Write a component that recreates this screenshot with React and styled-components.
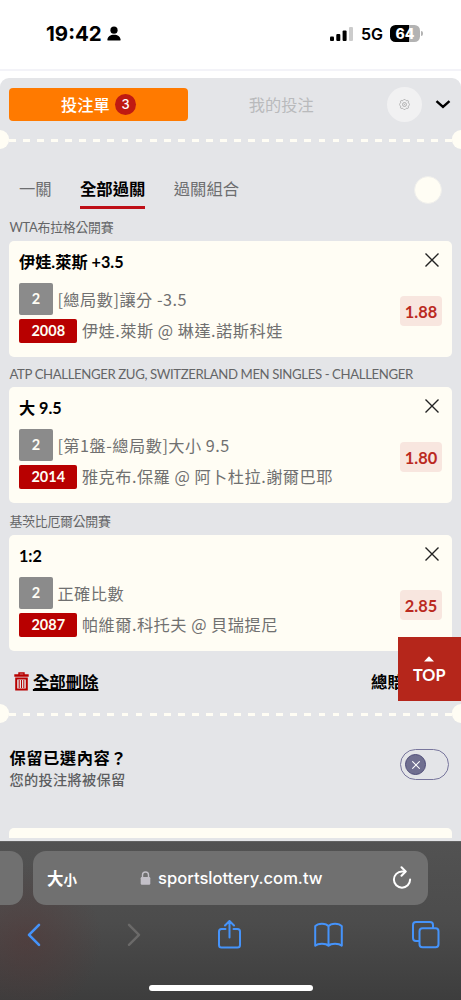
import styled, { createGlobalStyle } from 'styled-components';

const GlobalStyle = createGlobalStyle`
    * {
        box-sizing: border-box;
    }
    body {
        margin: 0;
        background: #fff;
        font-family: Lato, 'Noto Sans CJK TC', sans-serif;
    }
`;

const cjk = `'Noto Sans CJK TC', sans-serif`;

const Screen = styled.div`
    position: relative;
    width: 461px;
    height: 1000px;
    overflow: hidden;
    display: flex;
    flex-direction: column;
    background: #fff;
`;

const StatusBar = styled.header`
    height: 71px;
    flex: none;
    display: flex;
    align-items: center;
    justify-content: space-between;
    padding: 0 38px 2px 46px;
    border-bottom: 2px solid #f3f3f8;
    font-family: Inter, sans-serif;
`;

const StatusGroup = styled.div`
    display: flex;
    align-items: center;
`;

const Clock = styled.span`
    width: 61px;
    font-size: 20.5px;
    font-weight: 700;
    line-height: 24px;
`;

const Network = styled.span`
    width: 29px;
    margin-left: 8px;
    font-size: 16px;
    font-weight: 600;
    line-height: 20px;
`;

const Battery = styled.span`
    width: 30px;
    height: 17px;
    border-radius: 5.5px;
    background: linear-gradient(90deg, #000 64%, #b3b3b3 64%);
    color: #fff;
    font-size: 14px;
    font-weight: 800;
    line-height: 17px;
    text-align: center;
`;

const BatteryTip = styled.span`
    width: 2px;
    height: 5px;
    margin-left: 1px;
    border-radius: 0 2px 2px 0;
    background: #b3b3b3;
`;

const Slip = styled.main`
    height: 763px;
    flex: none;
    margin-top: 7px;
    border-radius: 9px 9px 0 0;
    background: #e4e5e8;
    overflow: hidden;
`;

const SlipHeader = styled.div`
    height: 52px;
    padding: 0 10px 0 9.3px;
    display: flex;
    align-items: center;
`;

const SlipTab = styled.button`
    width: 179px;
    height: 33px;
    margin-right: 4px;
    padding: 0;
    display: flex;
    align-items: center;
    justify-content: center;
    gap: 5.5px;
    border: 0;
    border-radius: 4px;
    background: ${(p) => (p.$active ? '#ff7a00' : 'transparent')};
    color: ${(p) => (p.$active ? '#fff' : '#b9babc')};
    font-family: ${cjk};
    font-size: 16.2px;
    font-weight: ${(p) => (p.$active ? 500 : 400)};
    line-height: 20px;
`;

const Count = styled.span`
    width: 21px;
    height: 21px;
    border-radius: 50%;
    background: #bf1a12;
    font-family: Inter, sans-serif;
    font-size: 13px;
    font-weight: 500;
    line-height: 21px;
    text-align: center;
`;

const GearButton = styled.div`
    width: 35px;
    height: 35px;
    margin-left: 12px;
    margin-right: 13.5px;
    flex: none;
    display: flex;
    align-items: center;
    justify-content: center;
    border-radius: 50%;
    background: #f1f1f2;
`;

const Tear = styled.div`
    height: 19px;
    display: flex;
    align-items: center;
`;

const Notch = styled.span`
    width: 9.3px;
    height: 19px;
    flex: none;
    border-radius: ${(p) => (p.$right ? '10px 0 0 10px' : '0 10px 10px 0')};
    background: #fffdf4;
`;

const Dashes = styled.span`
    flex: 1;
    height: 3px;
    margin-top: 2px;
    background: repeating-linear-gradient(
        90deg,
        #fffdf4 0 6.8px,
        transparent 6.8px 14.07px
    );
`;

const ComboTabs = styled.nav`
    height: 68px;
    padding: 22px 19px 0 19px;
    display: flex;
    gap: 28.3px;
`;

const ComboTab = styled.span`
    height: 37.5px;
    padding-top: 5px;
    border-bottom: 3.5px solid ${(p) => (p.$active ? '#bf0f17' : 'transparent')};
    color: ${(p) => (p.$active ? '#000' : '#6d6e70')};
    font-family: ${cjk};
    font-size: 16.35px;
    font-weight: ${(p) => (p.$active ? 700 : 400)};
    line-height: 24px;
    white-space: nowrap;
`;

const RoundSlot = styled.span`
    width: 28px;
    height: 28px;
    margin-top: 5px;
    margin-left: auto;
    border-radius: 50%;
    background: #fffdf4;
    border: 1px solid #efefec;
`;

const League = styled.div`
    height: ${(p) => p.$height}px;
    padding: 0 9.5px ${(p) => (p.$latin ? 3 : 4)}px;
    display: flex;
    align-items: flex-end;
    color: #646567;
    font-size: ${(p) => (p.$latin ? 13.2 : 12.9)}px;
    line-height: 20px;
    letter-spacing: ${(p) => (p.$latin ? '-0.39px' : '-0.25px')};
    white-space: nowrap;
`;

const Card = styled.section`
    height: 116px;
    margin: 0 9.3px;
    padding: 0 9.7px;
    display: flex;
    justify-content: space-between;
    border-radius: 5px;
    background: #fffdf4;
`;

const CardSide = styled.div`
    padding-top: 12px;
    display: flex;
    flex-direction: column;
    align-items: flex-end;
    gap: 29px;
`;

const Pick = styled.h3`
    height: 42px;
    margin: 0;
    color: #000;
    font-size: 16.2px;
    font-weight: 700;
    line-height: 42px;
`;

const Line = styled.div`
    display: flex;
    align-items: center;
    gap: 4.4px;
    margin-bottom: 4px;
    color: #707070;
    font-family: ${cjk};
    font-size: 16.2px;
    letter-spacing: 0.5px;
    line-height: 23px;
    white-space: nowrap;
`;

const Tag = styled.span`
    width: ${(p) => (p.$red ? 58.5 : 34)}px;
    height: ${(p) => (p.$red ? 23.5 : 32)}px;
    border-radius: 2px;
    background: ${(p) => (p.$red ? '#b80000' : '#8b8b8b')};
    color: #fffdf4;
    font-family: Lato, sans-serif;
    font-size: 14.5px;
    font-weight: 700;
    letter-spacing: 0;
    line-height: ${(p) => (p.$red ? 24 : 32)}px;
    text-align: center;
`;

const Odds = styled.span`
    width: 42px;
    height: 30px;
    border-radius: 4px;
    background: #f8e6df;
    color: #bb2a1f;
    font-size: 16.4px;
    font-weight: 700;
    line-height: 31px;
    text-align: center;
`;

const Summary = styled.div`
    height: 53px;
    padding: 7px 9px 0 13.5px;
    display: flex;
    align-items: flex-start;
    justify-content: space-between;
    font-family: ${cjk};
    font-size: 16.4px;
    font-weight: 700;
    line-height: 46px;
`;

const ClearAll = styled.span`
    display: flex;
    align-items: center;
    gap: 4.4px;

    span {
        text-decoration: underline;
        text-decoration-thickness: 1.5px;
        text-underline-offset: 1px;
    }
`;

const TotalOdds = styled.span`
    width: 81px;
`;

const Keep = styled.div`
    height: 105px;
    padding: 22px 12px 0 9.5px;
    display: flex;
    justify-content: space-between;
`;

const KeepTitle = styled.div`
    color: #000;
    font-family: ${cjk};
    font-size: 16.3px;
    font-weight: 700;
    letter-spacing: 0.5px;
    line-height: 24px;
`;

const KeepNote = styled.div`
    color: #5c5d5f;
    font-family: ${cjk};
    font-size: 14.2px;
    font-weight: 500;
    letter-spacing: 0.3px;
    line-height: 20px;
`;

const Toggle = styled.div`
    width: 49px;
    height: 31px;
    margin-top: 4px;
    padding: 0 4px;
    display: flex;
    align-items: center;
    border: 1px solid #77759c;
    border-radius: 16px;
`;

const Knob = styled.span`
    width: 21px;
    height: 21px;
    display: flex;
    align-items: center;
    justify-content: center;
    border: 1px solid #4f4d78;
    border-radius: 50%;
    background: #706f90;
`;

const NextCard = styled.div`
    height: 9.6px;
    margin: 0 9.3px;
    border-radius: 5px 5px 0 0;
    background: #fffdf4;
`;

const TopButton = styled.button`
    position: absolute;
    right: 0;
    top: 637px;
    width: 63.5px;
    height: 63.5px;
    padding: 19px 0 0;
    display: flex;
    flex-direction: column;
    align-items: center;
    border: 0;
    background: #b5261b;
    color: #fff;
    font-family: Lato, sans-serif;
    font-size: 16.2px;
    font-weight: 700;
    line-height: 20px;
    gap: 3px;
`;

const Browser = styled.footer`
    flex: 1;
    display: flex;
    flex-direction: column;
    align-items: center;
    border-top: 1px solid #626262;
    background: radial-gradient(
            circle at 26px 98px,
            rgba(88, 50, 50, 0.42),
            rgba(88, 50, 50, 0) 76px
        ),
        linear-gradient(#525252, #4c4c4c 50%, #3d3d3d);
`;

const AddressRow = styled.div`
    width: 461px;
    padding-top: 9px;
    display: flex;
    gap: 10px;
`;

const PrevTab = styled.div`
    width: 23px;
    height: 54px;
    border-radius: 0 13px 13px 0;
    background: #707070;
`;

const AddressBar = styled.div`
    width: 395px;
    height: 54px;
    padding: 0 16px 0 14px;
    display: flex;
    align-items: center;
    border-radius: 13px;
    background: #707070;
    color: #fff;
`;

const TextSize = styled.span`
    width: 93px;
    font-family: ${cjk};
    font-size: 16.5px;
    font-weight: 700;
    line-height: 24px;

    small {
        font-size: 13.5px;
    }
`;

const Url = styled.span`
    width: 234px;
    margin-left: 7px;
    font-family: Inter, sans-serif;
    font-size: 16.6px;
    font-weight: 500;
    line-height: 24px;
`;

const Toolbar = styled.div`
    width: 461px;
    height: 60px;
    padding: 0 21px 0 20px;
    display: flex;
    align-items: center;
    justify-content: space-between;
`;

const HomeBar = styled.div`
    width: 164px;
    height: 6px;
    margin-top: 19.5px;
    border-radius: 3px;
    background: #fff;
`;

const bets = [
    {
        league: 'WTA布拉格公開賽',
        labelHeight: 24,
        pick: '伊娃.萊斯 +3.5',
        market: '[總局數]讓分 -3.5',
        code: '2008',
        match: '伊娃.萊斯 @ 琳達.諾斯科娃',
        odds: '1.88',
    },
    {
        league: 'ATP CHALLENGER ZUG, SWITZERLAND MEN SINGLES - CHALLENGER',
        latin: true,
        labelHeight: 30,
        pick: '大 9.5',
        market: '[第1盤-總局數]大小 9.5',
        code: '2014',
        match: '雅克布.保羅 @ 阿卜杜拉.謝爾巴耶',
        odds: '1.80',
    },
    {
        league: '基茨比厄爾公開賽',
        labelHeight: 32,
        pick: '1:2',
        market: '正確比數',
        code: '2087',
        match: '帕維爾.科托夫 @ 貝瑞提尼',
        odds: '2.85',
    },
];

function CloseIcon({ size = 14, color = '#222', width = 1.4 }) {
    return (
        <svg width={size} height={size} viewBox="0 0 14 14" fill="none">
            <path
                d="M.5.5l13 13M13.5.5l-13 13"
                stroke={color}
                strokeWidth={width}
            />
        </svg>
    );
}

// eight rounded lobes around the hub
function GearIcon() {
    const points = [];
    for (let i = 0; i < 64; i++) {
        const a = (i / 64) * Math.PI * 2;
        const r = 8.6 + 0.9 * Math.cos(a * 8);
        points.push(
            `${(10 + r * Math.cos(a)).toFixed(2)},${(10 + r * Math.sin(a)).toFixed(2)}`
        );
    }
    return (
        <svg
            width="11"
            height="11"
            viewBox="0 0 20 20"
            fill="none"
            stroke="#a0a0a0"
            strokeWidth="1.4"
        >
            <polygon points={points.join(' ')} />
            <circle cx="10" cy="10" r="3.6" />
            <circle cx="10" cy="10" r=".6" />
        </svg>
    );
}

function TearLine() {
    return (
        <Tear>
            <Notch />
            <Dashes />
            <Notch $right />
        </Tear>
    );
}

function Bet({ bet }) {
    return (
        <>
            <League $height={bet.labelHeight} $latin={bet.latin}>
                {bet.league}
            </League>
            <Card>
                <div>
                    <Pick>{bet.pick}</Pick>
                    <Line>
                        <Tag>2</Tag>
                        {bet.market}
                    </Line>
                    <Line>
                        <Tag $red>{bet.code}</Tag>
                        {bet.match}
                    </Line>
                </div>
                <CardSide>
                    <svg width="17" height="14" viewBox="0 0 17 14">
                        <path
                            d="M.5.5l13 13M13.5.5l-13 13"
                            stroke="#222"
                            strokeWidth="1.4"
                        />
                    </svg>
                    <Odds>{bet.odds}</Odds>
                </CardSide>
            </Card>
        </>
    );
}

function App() {
    return (
        <Screen>
            <GlobalStyle />
            <StatusBar>
                <StatusGroup>
                    <Clock>19:42</Clock>
                    <svg width="14" height="15" viewBox="0 0 14 15">
                        <circle cx="7" cy="4.2" r="3.6" />
                        <path d="M1.2 14.500C.5 14.500.3 14 .4 13.400.8 10.800 3.300 8.800 7 8.800s6.200 2 6.600 4.600c.1.600-.1 1.100-.8 1.100z" />
                    </svg>
                </StatusGroup>
                <StatusGroup>
                    <svg width="23" height="14" viewBox="0 0 23 14">
                        <rect x="0" y="9.500" width="4" height="4.500" rx="1" />
                        <rect x="6.300" y="7" width="4" height="7" rx="1" />
                        <rect x="12.600" y="3.500" width="4" height="10.500" rx="1" />
                        <rect x="19" y="0" width="4" height="14" rx="1" fill="#ccc" />
                    </svg>
                    <Network>5G</Network>
                    <Battery>64</Battery>
                    <BatteryTip />
                </StatusGroup>
            </StatusBar>

            <Slip>
                <SlipHeader>
                    <SlipTab $active>
                        投注單
                        <Count>3</Count>
                    </SlipTab>
                    <SlipTab>我的投注</SlipTab>
                    <GearButton>
                        <GearIcon />
                    </GearButton>
                    <svg width="16" height="10" viewBox="0 0 16 10" fill="none">
                        <path d="M1.500 2L8 8l6.500-6" stroke="#000" strokeWidth="2.400" />
                    </svg>
                </SlipHeader>

                <TearLine />

                <ComboTabs>
                    <ComboTab>一關</ComboTab>
                    <ComboTab $active>全部過關</ComboTab>
                    <ComboTab>過關組合</ComboTab>
                    <RoundSlot />
                </ComboTabs>

                {bets.map((bet) => (
                    <Bet key={bet.code} bet={bet} />
                ))}

                <Summary>
                    <ClearAll>
                        <svg width="15" height="19" viewBox="0 0 15 19" fill="none">
                            <path d="M5 3V1h5v2" stroke="#b80000" strokeWidth="1.400" />
                            <path d="M.3 3.500h14.400" stroke="#b80000" strokeWidth="2.500" />
                            <path
                                d="M2.200 6.500h10.600v11H2.200z"
                                stroke="#b80000"
                                strokeWidth="2"
                            />
                            <path
                                d="M5.200 8v8M7.500 8v8M9.800 8v8"
                                stroke="#b80000"
                                strokeWidth="1"
                            />
                        </svg>
                        <span>全部刪除</span>
                    </ClearAll>
                    <TotalOdds>總賠率</TotalOdds>
                </Summary>

                <TearLine />

                <Keep>
                    <div>
                        <KeepTitle>保留已選內容？</KeepTitle>
                        <KeepNote>您的投注將被保留</KeepNote>
                    </div>
                    <div>
                        <Toggle>
                            <Knob>
                                <CloseIcon size={8} color="#fff" width={1.8} />
                            </Knob>
                        </Toggle>
                    </div>
                </Keep>
                <NextCard />
            </Slip>

            <TopButton>
                <svg width="10" height="6" viewBox="0 0 10 6">
                    <path d="M5 .3L10 5.500H0z" fill="#fff" />
                </svg>
                TOP
            </TopButton>

            <Browser>
                <AddressRow>
                    <PrevTab />
                    <AddressBar>
                        <TextSize>
                            大<small>小</small>
                        </TextSize>
                        <svg width="11" height="14" viewBox="0 0 11 14" fill="none">
                            <path
                                d="M2.500 7V4a3 3 0 0 1 6 0v3"
                                stroke="#c3c0c8"
                                strokeWidth="1.400"
                            />
                            <rect x=".7" y="6" width="9.600" height="7.700" rx="1.200" fill="#c3c0c8" />
                        </svg>
                        <Url>sportslottery.com.tw</Url>
                        <svg
                            width="20"
                            height="25"
                            viewBox="0 0 20 25"
                            fill="none"
                            stroke="#fff"
                            strokeWidth="2"
                            strokeLinecap="round"
                            strokeLinejoin="round"
                        >
                            <path d="M13.300 5.500H10A8.100 8.100 0 1 0 18.100 13.600" />
                            <path d="M9.500 1.200l4.200 4.300-4.200 4.300" />
                        </svg>
                    </AddressBar>
                </AddressRow>
                <Toolbar>
                    <svg
                        width="28"
                        height="30"
                        viewBox="0 0 28 30"
                        fill="none"
                        stroke="#4593fa"
                        strokeWidth="2.600"
                        strokeLinecap="round"
                        strokeLinejoin="round"
                    >
                        <path d="M19 4.800L9 14.800l10 10" />
                    </svg>
                    <svg
                        width="28"
                        height="30"
                        viewBox="0 0 28 30"
                        fill="none"
                        stroke="#6b6a69"
                        strokeWidth="2.400"
                        strokeLinecap="round"
                        strokeLinejoin="round"
                    >
                        <path d="M11 4.800l10 10-10 10" />
                    </svg>
                    <svg
                        width="28"
                        height="30"
                        viewBox="0 0 28 30"
                        fill="none"
                        stroke="#4593fa"
                        strokeWidth="2"
                        strokeLinecap="round"
                        strokeLinejoin="round"
                    >
                        <path d="M10.500 9H6.500a2.500 2.500 0 0 0-2.500 2.500V25a2.500 2.500 0 0 0 2.500 2.500h16A2.500 2.500 0 0 0 25 25V11.500A2.500 2.500 0 0 0 22.500 9h-4M14.500 17.500V1.500M10 5.500l4.500-4.500L19 5.500" />
                    </svg>
                    <svg
                        width="30"
                        height="30"
                        viewBox="0 0 30 30"
                        fill="none"
                        stroke="#4593fa"
                        strokeWidth="2"
                        strokeLinejoin="round"
                    >
                        <path d="M15.500 6.200C13 2.800 5 2.800 2.200 6.200v19.500c2.800-2.500 10.800-2.500 13.300 0 2.500-2.500 10.500-2.500 13.300 0V6.200C26 2.800 18 2.800 15.500 6.200zM15.500 6.200v19.500" />
                    </svg>
                    <svg
                        width="28"
                        height="30"
                        viewBox="0 0 28 30"
                        fill="none"
                        stroke="#4593fa"
                        strokeWidth="2"
                    >
                        <path d="M7 21H4a3 3 0 0 1-3-3V5a3 3 0 0 1 3-3h14a3 3 0 0 1 3 3v3" />
                        <rect x="7.500" y="8.300" width="19" height="19" rx="3" />
                    </svg>
                </Toolbar>
                <HomeBar />
            </Browser>
        </Screen>
    );
}

export default App;
